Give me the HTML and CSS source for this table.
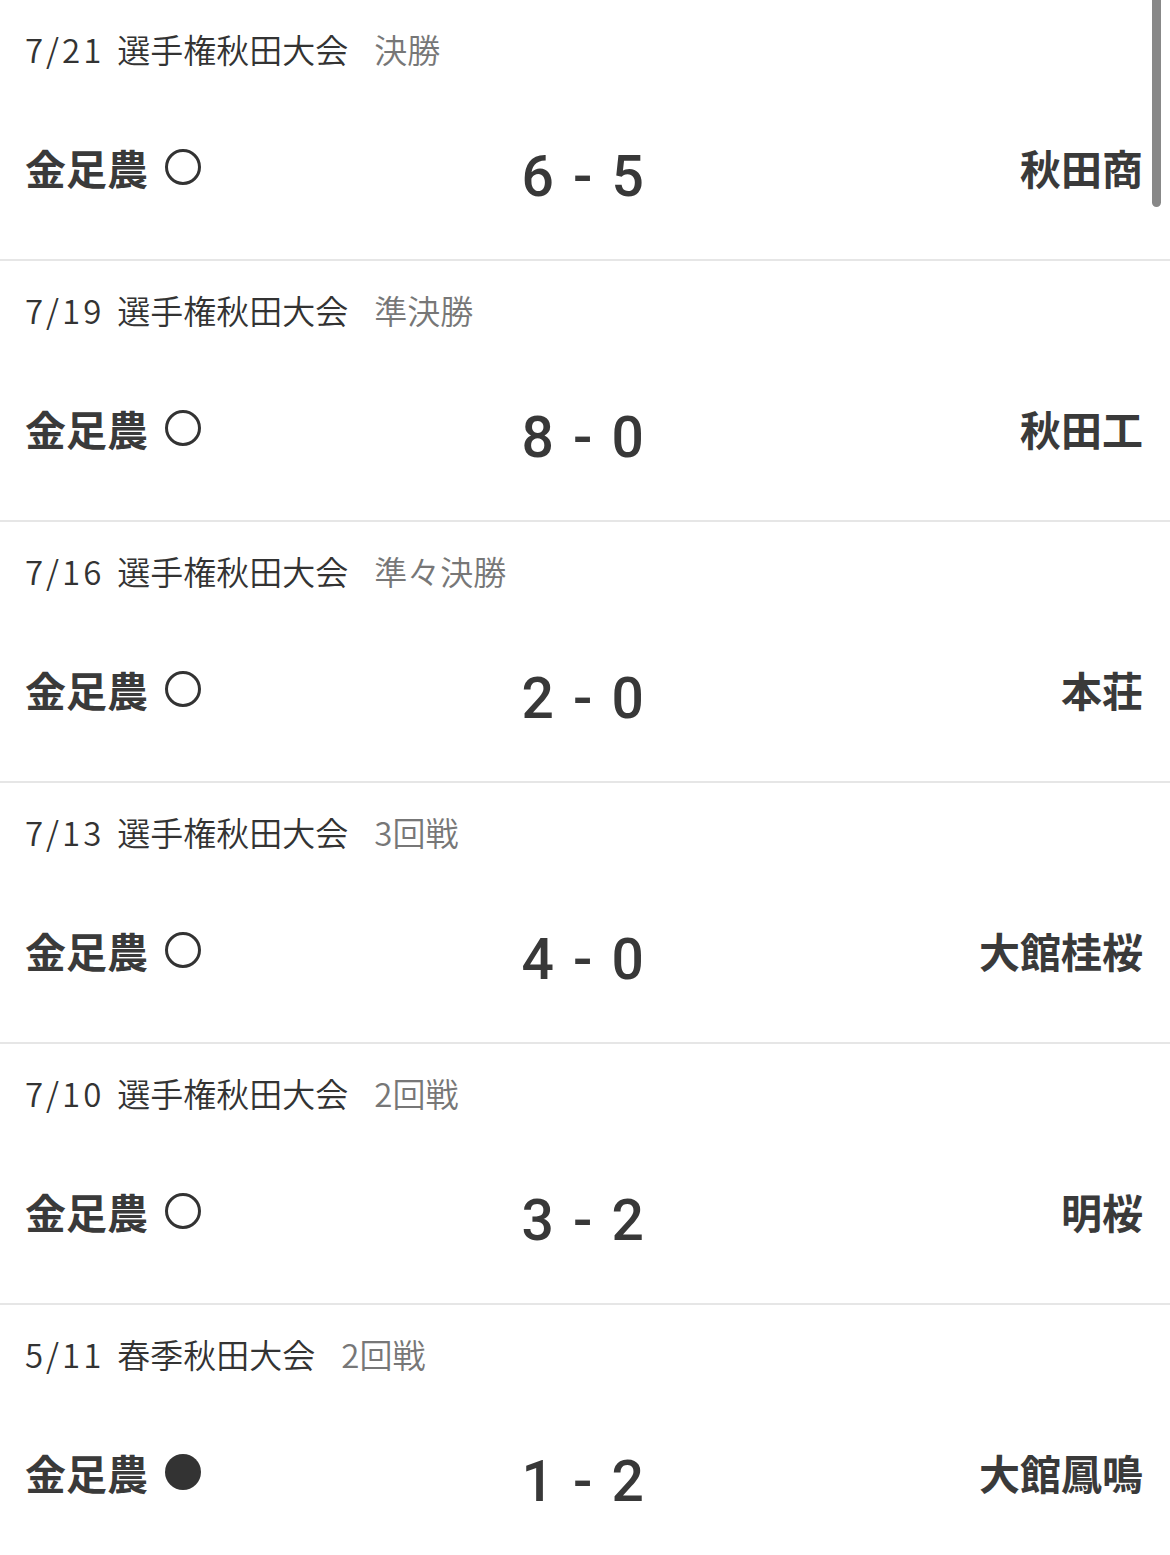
FILE: index.html
```html
<!DOCTYPE html>
<html lang="ja">
<head>
<meta charset="utf-8">
<title>試合結果</title>
<link rel="stylesheet" href="styles.css">
</head>
<body>
<div class="list">
  <div class="game">
    <div class="head"><span class="date">7/21</span><span class="cup">選手権秋田大会</span><span class="round">決勝</span></div>
    <div class="main">
      <div class="team home">金足農<span class="mark win"></span></div>
      <div class="score">6 - 5</div>
      <div class="team away">秋田商</div>
    </div>
  </div>
  <div class="game">
    <div class="head"><span class="date">7/19</span><span class="cup">選手権秋田大会</span><span class="round">準決勝</span></div>
    <div class="main">
      <div class="team home">金足農<span class="mark win"></span></div>
      <div class="score">8 - 0</div>
      <div class="team away">秋田工</div>
    </div>
  </div>
  <div class="game">
    <div class="head"><span class="date">7/16</span><span class="cup">選手権秋田大会</span><span class="round">準々決勝</span></div>
    <div class="main">
      <div class="team home">金足農<span class="mark win"></span></div>
      <div class="score">2 - 0</div>
      <div class="team away">本荘</div>
    </div>
  </div>
  <div class="game">
    <div class="head"><span class="date">7/13</span><span class="cup">選手権秋田大会</span><span class="round">3回戦</span></div>
    <div class="main">
      <div class="team home">金足農<span class="mark win"></span></div>
      <div class="score">4 - 0</div>
      <div class="team away">大館桂桜</div>
    </div>
  </div>
  <div class="game">
    <div class="head"><span class="date">7/10</span><span class="cup">選手権秋田大会</span><span class="round">2回戦</span></div>
    <div class="main">
      <div class="team home">金足農<span class="mark win"></span></div>
      <div class="score">3 - 2</div>
      <div class="team away">明桜</div>
    </div>
  </div>
  <div class="game">
    <div class="head"><span class="date">5/11</span><span class="cup">春季秋田大会</span><span class="round">2回戦</span></div>
    <div class="main">
      <div class="team home">金足農<span class="mark lose"></span></div>
      <div class="score">1 - 2</div>
      <div class="team away">大館鳳鳴</div>
    </div>
  </div>
</div>
<div class="scrollbar"></div>
</body>
</html>
```
FILE: styles.css
```css
html, body {
  margin: 0;
  padding: 0;
  background: #ffffff;
}
body {
  font-family: "Noto Sans CJK JP", "Noto Sans", sans-serif;
  color: #333333;
  overflow: hidden;
}
.list {
  display: flex;
  flex-direction: column;
}
.game {
  height: 261px;
  box-sizing: border-box;
  border-bottom: 2px solid #e6e6e6;
  padding: 29px 27px 0 25px;
  flex-shrink: 0;
}
.head {
  font-size: 33px;
  font-weight: 350;
  line-height: 40px;
  height: 40px;
  white-space: nowrap;
  color: #333333;
}
.date {
  letter-spacing: 3px;
  margin-right: 13px;
}
.round {
  margin-left: 26px;
  color: #777777;
}
.main {
  display: grid;
  grid-template-columns: 1fr auto 1fr;
  align-items: start;
  margin-top: 74px;
}
.team {
  font-size: 41px;
  font-weight: 700;
  line-height: 48px;
  color: #3a3a3a;
  white-space: nowrap;
}
.home {
  display: flex;
  align-items: center;
}
.away {
  text-align: right;
}
.mark {
  display: inline-block;
  width: 36px;
  height: 36px;
  border-radius: 50%;
  box-sizing: border-box;
  margin-left: 17px;
}
.mark.win {
  border: 3px solid #333333;
}
.mark.lose {
  background: #333333;
}
.score {
  font-family: Roboto, "Liberation Sans", Arial, sans-serif;
  font-weight: 500;
  font-size: 57px;
  line-height: 57px;
  letter-spacing: 2.5px;
  color: #383838;
  margin-top: 5px;
  white-space: pre;
}
.scrollbar {
  position: fixed;
  top: 0;
  right: 9px;
  width: 9px;
  height: 207px;
  background: #888888;
  border-radius: 0 0 5px 5px;
}
```
